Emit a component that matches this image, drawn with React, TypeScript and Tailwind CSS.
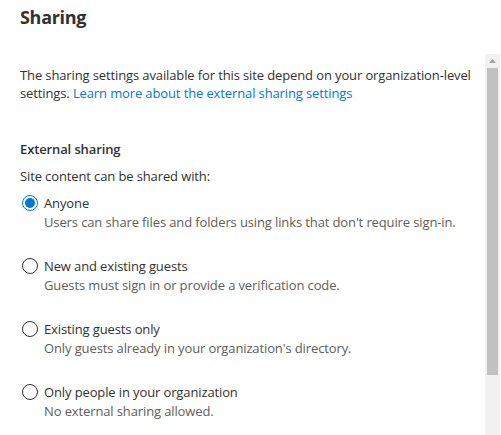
import React from 'react';

const options = [
  { label: 'Anyone', desc: "Users can share files and folders using links that don't require sign-in.", checked: true },
  { label: 'New and existing guests', desc: 'Guests must sign in or provide a verification code.', checked: false },
  { label: 'Existing guests only', desc: "Only guests already in your organization's directory.", checked: false },
  { label: 'Only people in your organization', desc: 'No external sharing allowed.', checked: false },
];

const Radio = ({ checked }: { checked: boolean }) => (
  <span
    className={`flex h-4 w-4 shrink-0 items-center justify-center rounded-full border ${
      checked ? 'border-[#0078d4]' : 'border-[#323130]'
    }`}
  >
    {checked && <span className="h-2.5 w-2.5 rounded-full bg-[#0078d4]" />}
  </span>
);

const App = () => {
  return (
    <div
      className="flex h-[435px] w-[501px] flex-col overflow-hidden bg-white text-[#323130]"
      style={{ fontFamily: '"Open Sans", "Noto Sans", sans-serif' }}
    >
      <div className="h-[54px] shrink-0 px-5 pt-[3px]">
        <h1 className="text-[18px] font-bold leading-[28px] tracking-[-0.3px]">Sharing</h1>
      </div>

      <div className="flex min-h-0 flex-1">
        <div className="flex-1 pl-5 pr-1 pt-[12px] tracking-[-0.12px]">
          <p className="text-[13px] leading-[18px]">
            The sharing settings available for this site depend on your organization-level settings.{' '}
            <a className="text-[#0078d4]">Learn more about the external sharing settings</a>
          </p>

          <h2 className="mt-[38px] text-[13px] font-semibold leading-[18px]">External sharing</h2>
          <p className="mt-[9px] text-[13px] leading-[18px]">Site content can be shared with:</p>

          <div className="mt-[9px] flex flex-col gap-[25px]">
            {options.map((o) => (
              <div key={o.label} className="flex gap-[6px]">
                <div className="ml-[2px] pt-[1px]">
                  <Radio checked={o.checked} />
                </div>
                <div className="text-[13px] leading-[19px]">
                  <div>{o.label}</div>
                  <div className="text-[#605e5c]">{o.desc}</div>
                </div>
              </div>
            ))}
          </div>
        </div>

        <div className="mr-[1px] flex w-[15px] shrink-0 flex-col bg-[#f1f1f1]">
          <div className="flex h-[14px] items-center justify-center">
            <svg width="7" height="4" viewBox="0 0 7 4">
              <path d="M0 4 L3.5 0 L7 4 Z" fill="#a3a3a3" />
            </svg>
          </div>
          <div className="mx-[2px] h-[307px] bg-[#c1c1c1]" />
        </div>
      </div>
    </div>
  );
};

export default App;
